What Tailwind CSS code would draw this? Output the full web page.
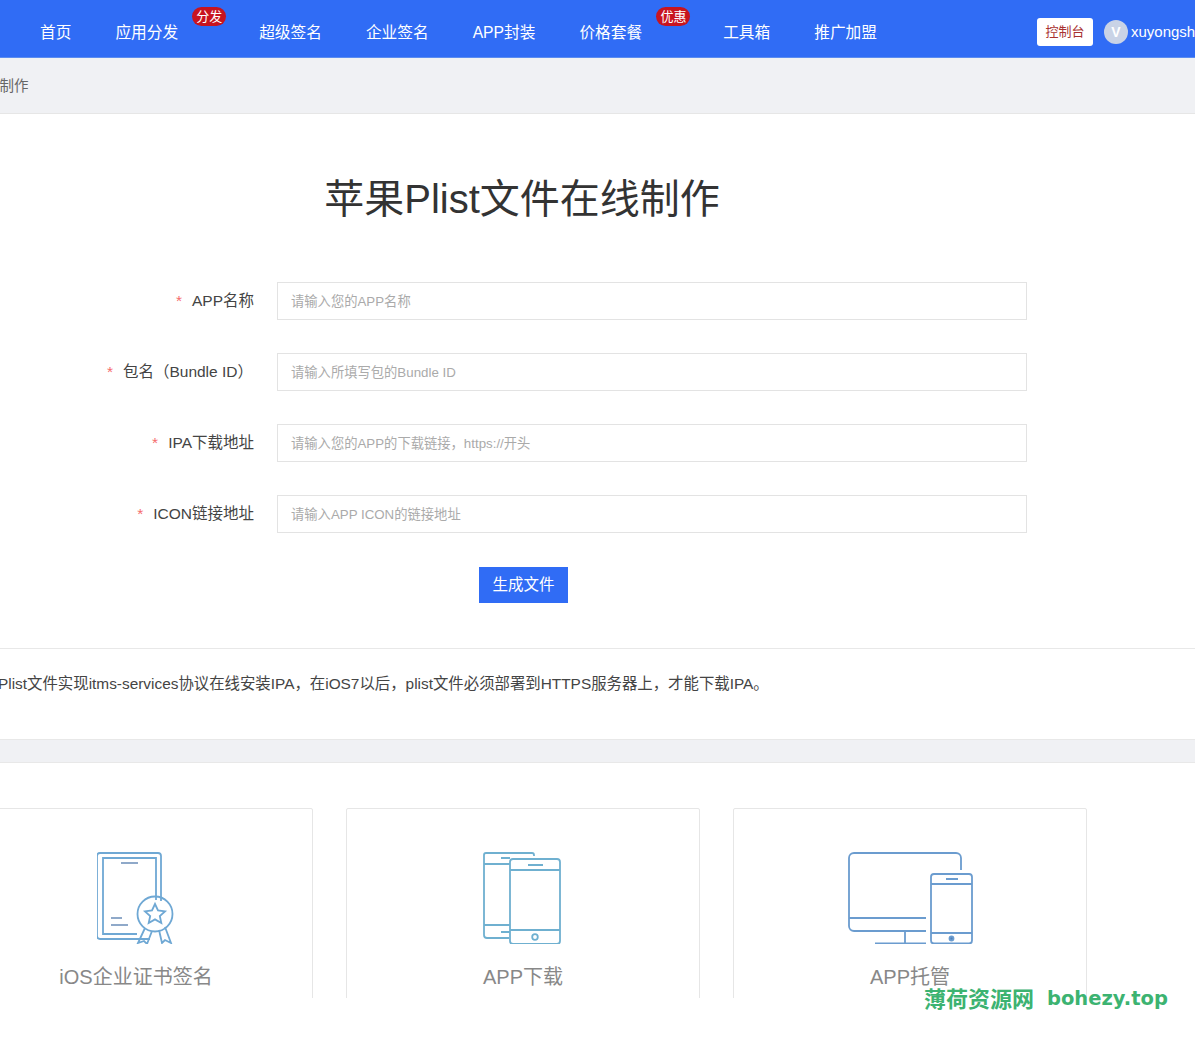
<!DOCTYPE html>
<html lang="zh-CN">
<head>
  <meta charset="UTF-8" />
  <meta name="viewport" content="width=device-width, initial-scale=1" />
  <title>苹果Plist文件在线制作</title>
  <script src="https://cdn.jsdelivr.net/npm/@tailwindcss/browser@4"></script>
</head>
<body class="bg-white min-h-screen overflow-hidden font-['Liberation_Sans','Noto_Sans_CJK_SC',sans-serif] text-[#333]">

  <div class="h-[998px] overflow-hidden">
    <!-- top nav -->
    <header class="h-[58px] bg-[#306cf5] border-b border-[#5b8cf0] flex items-center pl-[40px] pt-[9px] text-white text-[15.7px] whitespace-nowrap">
      <nav class="flex gap-[44px]">
        <a>首页</a>
        <a class="relative mr-[37px]">应用分发
          <span class="absolute left-[77px] -top-[14px] w-[34px] h-[19px] rounded-full bg-[#c8141f] text-[13px] leading-[19px] text-center">分发</span>
        </a>
        <a>超级签名</a>
        <a>企业签名</a>
        <a>APP封装</a>
        <a class="relative mr-[37px]">价格套餐
          <span class="absolute left-[77px] -top-[14px] w-[34px] h-[19px] rounded-full bg-[#c8141f] text-[13px] leading-[19px] text-center">优惠</span>
        </a>
        <a>工具箱</a>
        <a>推广加盟</a>
      </nav>
      <div class="flex items-center ml-[160px] -mt-[2px]">
        <span class="w-[56px] h-[28px] bg-white rounded-[3px] text-[#a8312f] text-[13px] leading-[28px] text-center">控制台</span>
        <span class="ml-[11px] w-[24px] h-[24px] rounded-full bg-[#c9d3e6] text-white text-[14px] font-bold leading-[24px] text-center">V</span>
        <span class="ml-[3px] text-[15px]">xuyongshi</span>
      </div>
    </header>

    <!-- breadcrumb -->
    <div class="h-[56px] bg-[#f0f1f4] border-b border-[#e6e6e6] flex items-center -ml-[28px] pt-[2px] text-[14.5px] text-[#666]">Plist制作</div>

    <!-- form -->
    <section class="h-[535px] border-b border-[#e8e8e8] pt-[62px]">
      <h1 class="w-[1044px] text-center text-[40px] leading-[46px] text-[#333]">苹果Plist文件在线制作</h1>
      <form class="mt-[60px] flex flex-col gap-[33px] text-[#444]">
        <div class="flex items-center">
          <label class="w-[254px] text-right text-[15.5px]"><span class="text-[#f56c6c] mr-[10px]">*</span>APP名称</label>
          <input class="ml-[23px] w-[750px] h-[38px] border border-[#e3e3e3] px-[13px] text-[13.3px] placeholder:text-[#aaa]" placeholder="请输入您的APP名称" />
        </div>
        <div class="flex items-center">
          <label class="w-[253px] text-right text-[15.5px]"><span class="text-[#f56c6c] mr-[10px]">*</span>包名（Bundle ID）</label>
          <input class="ml-[24px] w-[750px] h-[38px] border border-[#e3e3e3] px-[13px] text-[13.3px] placeholder:text-[#aaa]" placeholder="请输入所填写包的Bundle ID" />
        </div>
        <div class="flex items-center">
          <label class="w-[254px] text-right text-[15.5px]"><span class="text-[#f56c6c] mr-[10px]">*</span>IPA下载地址</label>
          <input class="ml-[23px] w-[750px] h-[38px] border border-[#e3e3e3] px-[13px] text-[13.3px] placeholder:text-[#aaa]" placeholder="请输入您的APP的下载链接，https://开头" />
        </div>
        <div class="flex items-center">
          <label class="w-[254px] text-right text-[15.5px]"><span class="text-[#f56c6c] mr-[10px]">*</span>ICON链接地址</label>
          <input class="ml-[23px] w-[750px] h-[38px] border border-[#e3e3e3] px-[13px] text-[13.3px] placeholder:text-[#aaa]" placeholder="请输入APP ICON的链接地址" />
        </div>
        <button type="button" class="self-start ml-[479px] mt-px w-[89px] h-[36px] bg-[#306cf5] text-white text-[15.5px]">生成文件</button>
      </form>
    </section>

    <!-- note -->
    <p class="h-[90px] pt-[25px] -ml-[2px] text-[15.4px] leading-[20px] text-[#444] whitespace-nowrap">Plist文件实现itms-services协议在线安装IPA，在iOS7以后，plist文件必须部署到HTTPS服务器上，才能下载IPA。</p>

    <div class="h-[24px] bg-[#f0f1f4] border-y border-[#e8e8e8]"></div>

    <!-- features -->
    <section class="flex gap-[33px] -ml-[41px] mt-[45px] w-[1200px]">
      <div class="w-[354px] h-[260px] shrink-0 border border-[#e6e6e6] rounded-[2px] flex flex-col items-center pt-[43px]">
        <svg class="h-[92px]" width="78" height="92" viewBox="97 852 78 92" fill="none" stroke="#6fa8d4" stroke-width="1.8">
          <path d="M150 939H100a3 3 0 0 1-3-3V856a3 3 0 0 1 3-3h58a3 3 0 0 1 3 3v45"/>
          <path d="M137 934H103V858h53v42"/>
          <path d="M121 863h17M111 918h11M111 925h17" stroke="#8fa9c9"/>
          <circle cx="155" cy="914" r="17.5"/>
          <path d="M155 904l3 6.500 7 .8-5.200 4.700 1.500 7-6.300-3.600-6.300 3.600 1.500-7-5.200-4.700 7-.8z"/>
          <path d="M145 928l-7 15 6-2 3 3 5-13M159 930l3 13 3-3 6 3-6-16"/>
        </svg>
        <h3 class="mt-[20px] text-[20px] leading-[27px] text-[#888]">iOS企业证书签名</h3>
      </div>
      <div class="w-[354px] h-[260px] shrink-0 border border-[#e6e6e6] rounded-[2px] flex flex-col items-center pt-[43px]">
        <svg class="h-[92px]" width="80" height="92" viewBox="483 852 80 92" fill="none" stroke="#6fb0d0" stroke-width="1.8">
          <path d="M534 856v-1a2 2 0 0 0-2-2h-46a2 2 0 0 0-2 2v80a3 3 0 0 0 3 3h22M484 864h26M484 925h26M501 858h9M501 932h9"/>
          <rect x="510" y="859" width="50" height="85" rx="3"/>
          <path d="M510 870h50M510 930h50M528 865h15"/>
          <circle cx="535" cy="937" r="2.800"/>
        </svg>
        <h3 class="mt-[20px] text-[20px] leading-[27px] text-[#888]">APP下载</h3>
      </div>
      <div class="w-[354px] h-[260px] shrink-0 border border-[#e6e6e6] rounded-[2px] flex flex-col items-center pt-[43px]">
        <svg class="h-[92px]" width="126" height="92" viewBox="847 852 126 92" fill="none" stroke="#6b9ccf" stroke-width="1.8">
          <path d="M961 870v-12a5 5 0 0 0-5-5H854a5 5 0 0 0-5 5v68a5 5 0 0 0 5 5h72M849 918h77M905 931v13M875 943.500h51"/>
          <rect x="931" y="874" width="41" height="69.500" rx="3"/>
          <path d="M931 884h41M931 933h41M946 879h12"/>
          <circle cx="951.500" cy="938.500" r="2" fill="#4f7fb8"/>
        </svg>
        <h3 class="mt-[20px] text-[20px] leading-[27px] text-[#888]">APP托管</h3>
      </div>
    </section>
  </div>

  <!-- watermark -->
  <div class="absolute left-[924px] top-[985px] h-[28px] flex items-center whitespace-nowrap text-[#3cb371] font-bold">
    <span class="text-[22px]">薄荷资源网</span>
    <span class="ml-[13px] text-[19.500px] font-['DejaVu_Sans',sans-serif]">bohezy.top</span>
  </div>

</body>
</html>
